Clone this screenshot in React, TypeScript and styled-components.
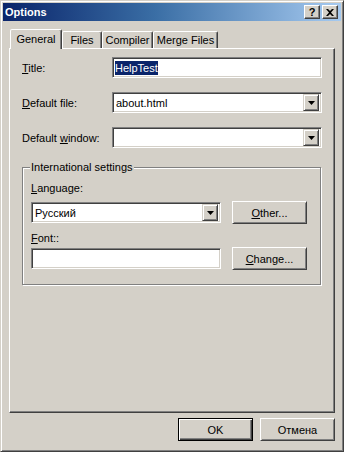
import React from "react";
import styled, { createGlobalStyle } from "styled-components";

const GlobalStyle = createGlobalStyle`
  html, body {
    margin: 0;
    padding: 0;
    background: #D4D0C8;
  }
  body {
    font-family: 'Liberation Sans', Arial, sans-serif;
    font-size: 11px;
    color: #000;
  }
`;

const face = "#D4D0C8";
const shadow = "#808080";
const dark = "#404040";

export default function App() {
  return (
    <>
      <GlobalStyle />
      <Window>
        <TitleBar>
          <Caption>Options</Caption>
          <CaptionButtons>
            <CaptionButton>
              <HelpGlyph>?</HelpGlyph>
            </CaptionButton>
            <CaptionButton>
              <svg width="8" height="7" viewBox="0 0 8 7">
                <path d="M0 0h2l2 2 2-2h2L5 3.5 8 7H6L4 5 2 7H0l3-3.5z" fill="#000" />
              </svg>
            </CaptionButton>
          </CaptionButtons>
        </TitleBar>

        <Body>
          <TabStrip>
            <Tab $active $width={52}>General</Tab>
            <Tab $width={40}>Files</Tab>
            <Tab $width={51}>Compiler</Tab>
            <Tab $width={65}>Merge Files</Tab>
          </TabStrip>

          <Panel>
            <Row>
              <Label><u>T</u>itle:</Label>
              <TextBox $width={210}>
                <Selected>HelpTest</Selected>
              </TextBox>
            </Row>
            <Row>
              <Label><u>D</u>efault file:</Label>
              <Combo $width={210} value="about.html" />
            </Row>
            <Row>
              <Label>Default <u>w</u>indow:</Label>
              <Combo $width={210} value="" />
            </Row>

            <Group>
              <Legend>International settings</Legend>
              <GroupLabel><u>L</u>anguage:</GroupLabel>
              <GroupRow>
                <Combo $width={190} value="Русский" />
                <PushButton><u>O</u>ther...</PushButton>
              </GroupRow>
              <GroupLabel $tight><u>F</u>ont::</GroupLabel>
              <GroupRow>
                <TextBox $width={190} />
                <PushButton><u>C</u>hange...</PushButton>
              </GroupRow>
            </Group>
          </Panel>

          <Footer>
            <PushButton $default>OK</PushButton>
            <PushButton>Отмена</PushButton>
          </Footer>
        </Body>
      </Window>
    </>
  );
}

const Combo = ({ value, $width }: { value: string; $width: number }) => (
  <Field $width={$width}>
    <FieldText>{value}</FieldText>
    <DropButton>
      <svg width="7" height="4" viewBox="0 0 7 4">
        <path d="M0 0h7L3.5 4z" fill="#000" />
      </svg>
    </DropButton>
  </Field>
);

const Window = styled.div`
  box-sizing: border-box;
  width: 344px;
  height: 452px;
  display: flex;
  flex-direction: column;
  padding: 2px;
  background: ${face};
  border: 1px solid;
  border-color: ${face} ${dark} ${dark} ${face};
  box-shadow: inset 1px 1px #fff, inset -1px -1px ${shadow};
`;

const TitleBar = styled.div`
  height: 18px;
  display: flex;
  align-items: center;
  justify-content: space-between;
  padding: 0 3px 0 2px;
  background: linear-gradient(90deg, #0A246A 0%, #3A6EA5 45%, #A6CAF0 100%);
`;

const Caption = styled.span`
  color: #fff;
  font-weight: bold;
  font-size: 11px;
`;

const CaptionButtons = styled.div`
  display: flex;
  gap: 2px;
`;

const CaptionButton = styled.div`
  box-sizing: border-box;
  width: 16px;
  height: 14px;
  display: flex;
  align-items: center;
  justify-content: center;
  background: ${face};
  border: 1px solid;
  border-color: #fff ${dark} ${dark} #fff;
  box-shadow: inset -1px -1px ${shadow};
`;

const HelpGlyph = styled.span`
  font-weight: bold;
  font-size: 11px;
  line-height: 11px;
`;

const Body = styled.div`
  flex: 1;
  display: flex;
  flex-direction: column;
  padding: 8px 6px 0 6px;
`;

const TabStrip = styled.div`
  display: flex;
  align-items: flex-end;
  height: 19px;
  padding-left: 1px;
`;

const Tab = styled.div<{ $active?: boolean; $width: number }>`
  box-sizing: border-box;
  width: ${(p) => p.$width}px;
  height: ${(p) => (p.$active ? 20 : 17)}px;
  margin-bottom: ${(p) => (p.$active ? -1 : 0)}px;
  position: relative;
  z-index: ${(p) => (p.$active ? 1 : 0)};
  display: flex;
  align-items: center;
  justify-content: center;
  padding-bottom: ${(p) => (p.$active ? 2 : 0)}px;
  background: ${face};
  border: 1px solid;
  border-bottom: none;
  border-color: #fff ${dark} transparent #fff;
  border-radius: 2px 2px 0 0;
  box-shadow: inset -1px 0 ${shadow};
`;

const Panel = styled.div`
  box-sizing: border-box;
  width: 326px;
  height: 365px;
  padding: 8px 0 0 12px;
  display: flex;
  flex-direction: column;
  gap: 14px;
  border: 1px solid;
  border-color: #fff ${dark} ${dark} #fff;
  box-shadow: inset -1px -1px ${shadow};
`;

const Row = styled.div`
  display: flex;
  align-items: center;
`;

const Label = styled.span`
  width: 90px;
`;

const Field = styled.div<{ $width: number }>`
  box-sizing: border-box;
  width: ${(p) => p.$width}px;
  height: 21px;
  display: flex;
  align-items: center;
  padding: 2px;
  background: #fff;
  border: 1px solid;
  border-color: ${shadow} #fff #fff ${shadow};
  box-shadow: inset 1px 1px ${dark}, inset -1px -1px ${face};
`;

const TextBox = styled(Field)`
  padding-left: 2px;
`;

const FieldText = styled.span`
  flex: 1;
  padding-left: 1px;
`;

const Selected = styled.span`
  background: #0A246A;
  color: #fff;
  padding: 1px 0;
`;

const DropButton = styled.div`
  box-sizing: border-box;
  width: 16px;
  height: 17px;
  display: flex;
  align-items: center;
  justify-content: center;
  background: ${face};
  border: 1px solid;
  border-color: ${face} ${dark} ${dark} ${face};
  box-shadow: inset 1px 1px #fff, inset -1px -1px ${shadow};
`;

const Group = styled.div`
  box-sizing: border-box;
  width: 299px;
  height: 118px;
  margin-top: 5px;
  padding: 0 0 0 8px;
  display: flex;
  flex-direction: column;
  border: 1px solid ${shadow};
  box-shadow: inset 1px 1px #fff, 1px 1px #fff;
`;

const Legend = styled.span`
  align-self: flex-start;
  margin: -7px 0 0 -1px;
  padding: 0 1px;
  line-height: 13px;
  background: ${face};
`;

const GroupLabel = styled.span<{ $tight?: boolean }>`
  line-height: 13px;
  margin-top: 8px;
  margin-bottom: ${(p) => (p.$tight ? 2 : 6)}px;
`;

const GroupRow = styled.div`
  display: flex;
  align-items: center;
  gap: 11px;
  height: 23px;
`;

const PushButton = styled.div<{ $default?: boolean }>`
  box-sizing: border-box;
  width: 75px;
  height: 23px;
  display: flex;
  align-items: center;
  justify-content: center;
  background: ${face};
  border: 1px solid;
  border-color: ${(p) => (p.$default ? "#000" : `#fff ${dark} ${dark} #fff`)};
  box-shadow: ${(p) =>
    p.$default
      ? `inset 1px 1px #fff, inset -1px -1px ${dark}, inset -2px -2px ${shadow}`
      : `inset 1px 1px ${face}, inset -1px -1px ${shadow}`};
`;

const Footer = styled.div`
  display: flex;
  justify-content: flex-end;
  gap: 7px;
  width: 326px;
  margin-top: 5px;
`;
